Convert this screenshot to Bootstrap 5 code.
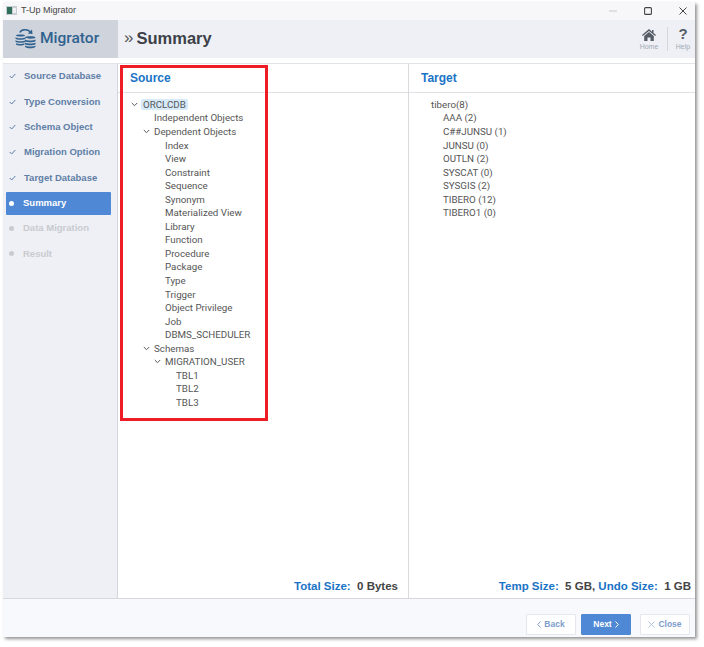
<!DOCTYPE html>
<html lang="en">
<head>
<meta charset="utf-8">
<title>T-Up Migrator</title>
<link href="https://cdn.jsdelivr.net/npm/bootstrap@5.3.0/dist/css/bootstrap.min.css" rel="stylesheet">
<style>
html,body{height:100%;}
body{background:#fff;font-family:"Liberation Sans",Arial,sans-serif;color:#444;overflow:hidden;}
.app-win{width:692px;height:635px;margin:2px 0 0 3px;box-shadow:2px 2px 3px rgba(60,60,60,.55);background:#fff;}
.title-bar{height:18px;background:#f7f7f9;padding:0 8px 0 3px;font-size:9px;color:#444;}
.logo-ico{width:11px;height:9px;margin-right:4px;}
.win-btns{gap:27px;}
.win-btn{width:8px;text-align:center;line-height:0;}
.head-bar{height:38px;background:#eef0f5;}
.brand-box{width:115px;height:100%;background:#ced3dc;color:#30628f;font-family:Roboto,"Liberation Sans",sans-serif;font-size:15.5px;font-weight:500;gap:4px;padding-left:12px;}
.page-h{font-size:16.5px;font-weight:700;color:#3c4048;padding:0 0 2px 6px;gap:3px;}
.page-h .arrow{font-weight:400;color:#555;font-size:17px;}
.tool-btn{text-align:center;font-size:7px;color:#a3a9b4;line-height:1;gap:3px;}
.tool-home{width:36px;}
.tool-help{width:24px;margin-left:3px;}
.tool-icon{height:13px;line-height:13px;}
.tool-sep{width:1px;height:24px;background:#d5d8df;}
.tool-q{font-size:15px;font-weight:700;color:#555c66;}
.main-area{height:537px;margin-top:5px;border-top:1px solid #e2e4e8;border-bottom:1px solid #d6d8dc;position:relative;}
.side-nav{width:115px;background:#eef0f5;padding:1px 6px 0 3px;border-right:1px solid #d4d6da;flex:none;}
.step-row{height:23px;margin-bottom:2.35px;font-size:9.5px;font-weight:700;color:#5f7ea6;padding-left:3px;gap:8px;}
.step-row.cur{background:#4f89d6;color:#fff;border-radius:1px;}
.step-row.off{color:#c9cbd0;}
.step-dot{width:5px;height:5px;border-radius:50%;background:currentColor;margin:0 1px 0 0;flex:none;}
.pane{flex:1 1 0;min-width:0;}
.pane-left{flex:0 0 291px;border-right:1px solid #d8dadd;}
.pane-head{height:29px;border-bottom:1px solid #dfe1e4;font-size:12px;font-weight:700;color:#1a73c6;padding-left:12px;}
.tree-box{padding:5px 0 0 0;font-family:Roboto,"Liberation Sans",sans-serif;font-size:9.75px;color:#555;flex:1 1 auto;}
.tree-line{height:13.55px;line-height:13.55px;white-space:nowrap;}
.tree-line svg{margin-right:4px;vertical-align:1px;}
.hl-node{background:#d6eafa;padding:0 2px;border-radius:2px;}
.d0{padding-left:13px;}
.d0 svg{margin-right:3px;}
.d1{padding-left:36px;}
.d1c{padding-left:25px;}
.d2{padding-left:47px;}
.d2c{padding-left:36px;}
.d3{padding-left:58px;}
.t0{padding-left:22px;}
.t1{padding-left:34px;}
.size-foot{font-size:11.5px;font-weight:700;color:#1a73c6;text-align:right;padding:0 4px 3px 0;height:20px;line-height:17px;}
.size-foot b{color:#444;}
.size-left{padding-right:10px;}
.foot-bar{height:38px;background:#f8f9fd;padding:0 5px 2px 0;}
.act-btn{width:50px;height:21px;font-size:8.5px;font-weight:700;background:#fff;border:1px solid #e4e7ee;color:#7d9dcb;border-radius:1px;padding:0;line-height:1;gap:3px;}
.act-btn.pri{background:#4f89d6;border-color:#4f89d6;color:#fff;margin:0 9px 0 5px;width:50px;}
.red-mark{position:absolute;left:117px;top:1px;width:148px;height:356px;border:3px solid #ee1c25;pointer-events:none;}
</style>
</head>
<body>
<div class="app-win d-flex flex-column">
  <div class="title-bar d-flex align-items-center">
    <svg class="logo-ico" viewBox="0 0 11 9"><rect width="11" height="9" fill="#c9ccd1"/><rect x="1" y="1" width="5" height="7" fill="#2f6f5a"/><rect x="7" y="2" width="3" height="5" fill="#eef0f2"/></svg>
    <span>T-Up Migrator</span>
    <div class="win-btns d-flex ms-auto align-items-center">
      <span class="win-btn"><svg width="8" height="8" viewBox="0 0 8 8"><path d="M0 4H8" stroke="#c8c8c8"/></svg></span>
      <span class="win-btn"><svg width="8" height="8" viewBox="0 0 8 8"><rect x=".6" y=".6" width="6.8" height="6.8" rx="1" fill="none" stroke="#444" stroke-width="1.1"/></svg></span>
      <span class="win-btn"><svg width="8" height="8" viewBox="0 0 8 8"><path d="M.5.5l7 7M7.500.5l-7 7" stroke="#444" stroke-width="1"/></svg></span>
    </div>
  </div>
  <div class="head-bar d-flex align-items-center">
    <div class="brand-box d-flex align-items-center">
      <svg width="21" height="21" viewBox="0 0 21 21" fill="#30628f">
        <path d="M1 7.500c0-1.300 9-1.300 9 0s-9 1.300-9 0zM.5 9.300c2 1.300 8 1.300 10 0v1.500c-2 1.300-8 1.300-10 0zM.5 12.300c2 1.300 8 1.300 10 0v1.500c-2 1.300-8 1.300-10 0zM1 15.300c2 1 6.500 1 8.500 0v1.300c-2 1.300-6.500 1.300-8.500 0z"/>
        <path d="M10 9.500c0-1.600 10.500-1.600 10.500 0s-10.500 1.600-10.500 0zM10 11.500c2.200 1.400 8.300 1.400 10.500 0v1.700c-2.200 1.400-8.300 1.400-10.500 0zM10 14.500c2.200 1.400 8.300 1.400 10.500 0v1.700c-2.200 1.400-8.300 1.400-10.500 0zM10 17.500c2.200 1.400 8.300 1.400 10.500 0v1.300c-2.200 2-8.300 2-10.500 0z"/>
        <path d="M5 4.500C6 1.500 12 .5 15.500 4" fill="none" stroke="#30628f" stroke-width="1.600"/>
        <path d="M12.800 5.500l4.700.6-.5-4.600z"/>
      </svg>
      <span>Migrator</span>
    </div>
    <div class="page-h d-flex align-items-center"><span class="arrow">»</span><span>Summary</span></div>
    <div class="d-flex align-items-center ms-auto">
      <div class="tool-btn tool-home d-flex flex-column align-items-center">
        <span class="tool-icon"><svg width="14" height="12" viewBox="0 0 14 12" fill="#555c66"><path d="M7 0L0 6l.8 1L7 1.900 13.200 7l.8-1-2.500-2.100V1H10v1.700z"/><path d="M7 3L2.200 7v5h3.300V8.500h3V12h3.300V7z"/></svg></span>
        <span>Home</span>
      </div>
      <div class="tool-sep"></div>
      <div class="tool-btn tool-help d-flex flex-column align-items-center">
        <span class="tool-icon tool-q">?</span>
        <span>Help</span>
      </div>
    </div>
  </div>
  <div class="main-area d-flex">
    <nav class="side-nav d-flex flex-column">
      <div class="step-row d-flex align-items-center"><svg width="7" height="6" viewBox="0 0 7 6"><path d="M.7 3l2 2L6.300 1" fill="none" stroke="#5f7ea6" stroke-width="1"/></svg><span>Source Database</span></div>
      <div class="step-row d-flex align-items-center"><svg width="7" height="6" viewBox="0 0 7 6"><path d="M.7 3l2 2L6.300 1" fill="none" stroke="#5f7ea6" stroke-width="1"/></svg><span>Type Conversion</span></div>
      <div class="step-row d-flex align-items-center"><svg width="7" height="6" viewBox="0 0 7 6"><path d="M.7 3l2 2L6.300 1" fill="none" stroke="#5f7ea6" stroke-width="1"/></svg><span>Schema Object</span></div>
      <div class="step-row d-flex align-items-center"><svg width="7" height="6" viewBox="0 0 7 6"><path d="M.7 3l2 2L6.300 1" fill="none" stroke="#5f7ea6" stroke-width="1"/></svg><span>Migration Option</span></div>
      <div class="step-row d-flex align-items-center"><svg width="7" height="6" viewBox="0 0 7 6"><path d="M.7 3l2 2L6.300 1" fill="none" stroke="#5f7ea6" stroke-width="1"/></svg><span>Target Database</span></div>
      <div class="step-row cur d-flex align-items-center"><i class="step-dot"></i><span>Summary</span></div>
      <div class="step-row off d-flex align-items-center"><i class="step-dot"></i><span>Data Migration</span></div>
      <div class="step-row off d-flex align-items-center"><i class="step-dot"></i><span>Result</span></div>
    </nav>
    <section class="pane pane-left d-flex flex-column">
      <div class="pane-head d-flex align-items-center">Source</div>
      <div class="tree-box">
        <div class="tree-line d0"><svg width="7" height="5" viewBox="0 0 7 5"><path d="M.8 1l2.700 2.700L6.200 1" fill="none" stroke="#555"/></svg><span class="hl-node">ORCLCDB</span></div>
        <div class="tree-line d1">Independent Objects</div>
        <div class="tree-line d1c"><svg width="7" height="5" viewBox="0 0 7 5"><path d="M.8 1l2.700 2.700L6.200 1" fill="none" stroke="#555"/></svg>Dependent Objects</div>
        <div class="tree-line d2">Index</div>
        <div class="tree-line d2">View</div>
        <div class="tree-line d2">Constraint</div>
        <div class="tree-line d2">Sequence</div>
        <div class="tree-line d2">Synonym</div>
        <div class="tree-line d2">Materialized View</div>
        <div class="tree-line d2">Library</div>
        <div class="tree-line d2">Function</div>
        <div class="tree-line d2">Procedure</div>
        <div class="tree-line d2">Package</div>
        <div class="tree-line d2">Type</div>
        <div class="tree-line d2">Trigger</div>
        <div class="tree-line d2">Object Privilege</div>
        <div class="tree-line d2">Job</div>
        <div class="tree-line d2">DBMS_SCHEDULER</div>
        <div class="tree-line d1c"><svg width="7" height="5" viewBox="0 0 7 5"><path d="M.8 1l2.700 2.700L6.200 1" fill="none" stroke="#555"/></svg>Schemas</div>
        <div class="tree-line d2c"><svg width="7" height="5" viewBox="0 0 7 5"><path d="M.8 1l2.700 2.700L6.200 1" fill="none" stroke="#555"/></svg>MIGRATION_USER</div>
        <div class="tree-line d3">TBL1</div>
        <div class="tree-line d3">TBL2</div>
        <div class="tree-line d3">TBL3</div>
      </div>
      <div class="size-foot size-left">Total Size: &nbsp;<b>0 Bytes</b></div>
    </section>
    <section class="pane d-flex flex-column">
      <div class="pane-head d-flex align-items-center">Target</div>
      <div class="tree-box">
        <div class="tree-line t0">tibero(8)</div>
        <div class="tree-line t1">AAA (2)</div>
        <div class="tree-line t1">C##JUNSU (1)</div>
        <div class="tree-line t1">JUNSU (0)</div>
        <div class="tree-line t1">OUTLN (2)</div>
        <div class="tree-line t1">SYSCAT (0)</div>
        <div class="tree-line t1">SYSGIS (2)</div>
        <div class="tree-line t1">TIBERO (12)</div>
        <div class="tree-line t1">TIBERO1 (0)</div>
      </div>
      <div class="size-foot">Temp Size: &nbsp;<b>5 GB,</b> Undo Size: &nbsp;<b>1 GB</b></div>
    </section>
    <div class="red-mark"></div>
  </div>
  <div class="foot-bar d-flex align-items-end justify-content-end">
    <button type="button" class="btn act-btn d-flex align-items-center justify-content-center"><svg width="4" height="7" viewBox="0 0 4 7"><path d="M3.500.5L.7 3.500l2.800 3" fill="none" stroke="#7d9dcb"/></svg><span>Back</span></button>
    <button type="button" class="btn act-btn pri d-flex align-items-center justify-content-center"><span>Next</span><svg width="4" height="7" viewBox="0 0 4 7"><path d="M.5.5l2.800 3-2.800 3" fill="none" stroke="#fff"/></svg></button>
    <button type="button" class="btn act-btn d-flex align-items-center justify-content-center"><svg width="7" height="7" viewBox="0 0 7 7"><path d="M.5.5l6 6M6.500.5l-6 6" stroke="#a9bfdd" stroke-width=".9"/></svg><span>Close</span></button>
  </div>
</div>
<script src="https://cdn.jsdelivr.net/npm/bootstrap@5.3.0/dist/js/bootstrap.bundle.min.js"></script>
</body>
</html>
